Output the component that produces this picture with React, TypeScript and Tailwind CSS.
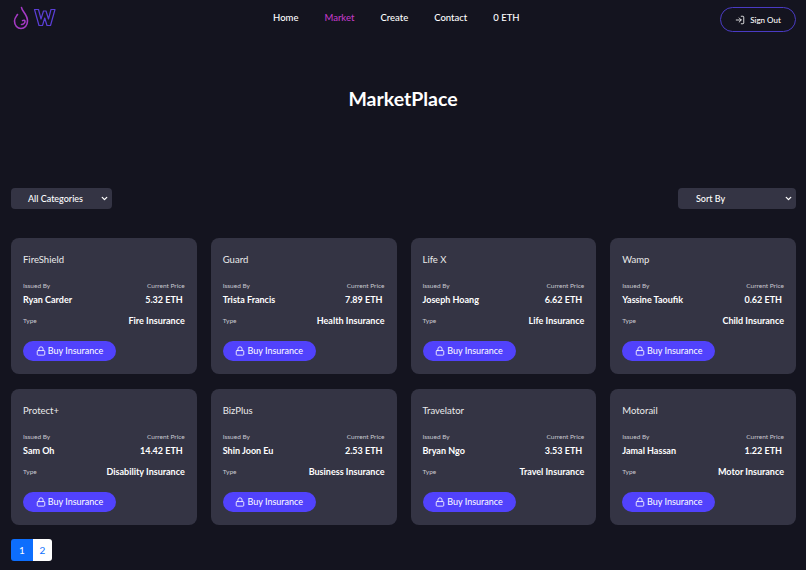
import { ChevronDown, LogIn, Lock } from "lucide-react";

const cards = [
  { name: "FireShield", issuer: "Ryan Carder", price: "5.32 ETH", type: "Fire Insurance" },
  { name: "Guard", issuer: "Trista Francis", price: "7.89 ETH", type: "Health Insurance" },
  { name: "Life X", issuer: "Joseph Hoang", price: "6.62 ETH", type: "Life Insurance" },
  { name: "Wamp", issuer: "Yassine Taoufik", price: "0.62 ETH", type: "Child Insurance" },
  { name: "Protect+", issuer: "Sam Oh", price: "14.42 ETH", type: "Disability Insurance" },
  { name: "BizPlus", issuer: "Shin Joon Eu", price: "2.53 ETH", type: "Business Insurance" },
  { name: "Travelator", issuer: "Bryan Ngo", price: "3.53 ETH", type: "Travel Insurance" },
  { name: "Motorail", issuer: "Jamal Hassan", price: "1.22 ETH", type: "Motor Insurance" },
];

function Logo() {
  return (
    <svg width="44" height="26" viewBox="0 0 44 26" fill="none" className="ml-[13px]">
      <path
        d="M8.5 2.5C9 6.5 14.5 9.5 14.5 16C14.5 20.5 11.5 23.5 8 23.5C4.5 23.5 1.5 20.5 1.5 16C1.5 13 3.5 11 4.5 9.5M8.5 19.5C10.5 19.5 12 18 12 16.3C12 15.2 11 14.8 9.5 15.6"
        stroke="#a53ac4"
        strokeWidth="1.6"
        strokeLinecap="round"
      />
      <path
        d="M21.5 4.5H25.5L28 14L30.5 6H33L35.5 14L38 4.5H42L37.5 20.5H34L31.7 13L29.5 20.5H26Z"
        stroke="#5b3fd6"
        strokeWidth="1.2"
        strokeLinejoin="round"
      />
    </svg>
  );
}

function Card({ name, issuer, price, type }: (typeof cards)[number]) {
  return (
    <div className="flex flex-col rounded-lg bg-[#343444] px-3 pt-[14px] pb-[13px] text-white">
      <h3 className="text-[9.5px] leading-4 font-normal text-[#ebebeb]">{name}</h3>
      <div className="mt-[12px] flex justify-between text-[6.5px] leading-[11px] text-[#c8c8d0]">
        <span>Issued By</span>
        <span>Current Price</span>
      </div>
      <div className="mt-[2px] flex justify-between text-[9px] leading-[14px] font-bold">
        <span>{issuer}</span>
        <span className="mr-[2px]">{price}</span>
      </div>
      <div className="mt-[7px] flex items-center justify-between">
        <span className="text-[6.5px] text-[#c8c8d0]">Type</span>
        <span className="text-[9px] leading-[14px] font-bold">{type}</span>
      </div>
      <button className="mt-[13px] flex h-5 w-[93px] items-center justify-center gap-[2px] rounded-full bg-[#5142fc] text-[9px] text-white">
        <Lock size={10} />
        Buy Insurance
      </button>
    </div>
  );
}

export default function App() {
  return (
    <div className="h-[570px] w-[806px] overflow-hidden bg-[#14141f] font-['Lato',sans-serif] text-white">
      <header className="relative flex h-[35px] items-center justify-between pt-[1px]">
        <Logo />
        <nav className="absolute left-[273px] top-[11px] flex gap-[26px] text-[9.5px] leading-[14px] font-medium">
          <a>Home</a>
          <a className="text-[#c13ac7]">Market</a>
          <a>Create</a>
          <a>Contact</a>
          <span>0 ETH</span>
        </nav>
        <button className="mt-[3px] mr-[10px] flex h-[25px] w-[76px] items-center justify-center gap-[5px] rounded-full border border-[#4a3bc4] text-[8px] font-medium">
          <LogIn size={10} />
          Sign Out
        </button>
      </header>

      <h1 className="mt-[52px] text-center text-[19.5px] leading-6 font-bold">MarketPlace</h1>

      <div className="mt-[77px] flex justify-between pr-[10px] pl-[11px]">
        <div className="flex h-[21px] w-[101px] items-center justify-between rounded-sm bg-[#343444] pr-[3px] pl-[17px] text-[9px] font-medium">
          All Categories
          <ChevronDown size={9} strokeWidth={3.5} />
        </div>
        <div className="flex h-[21px] w-[118px] items-center justify-between rounded-sm bg-[#343444] pr-[3px] pl-[18px] text-[9px] font-medium">
          Sort By
          <ChevronDown size={9} strokeWidth={3.5} />
        </div>
      </div>

      <main className="mt-[29px] grid grid-cols-4 gap-x-[14px] gap-y-[15px] pr-[10px] pl-[11px]">
        {cards.map((c) => (
          <Card key={c.name} {...c} />
        ))}
      </main>

      <div className="mt-[14px] ml-[11px] flex h-[22px] w-[41px] overflow-hidden rounded-[3px] text-[10px]">
        <span className="flex w-[22px] items-center justify-center bg-[#0d6efd] text-white">1</span>
        <span className="flex w-[19px] items-center justify-center bg-white text-[#0d6efd]">2</span>
      </div>
    </div>
  );
}
